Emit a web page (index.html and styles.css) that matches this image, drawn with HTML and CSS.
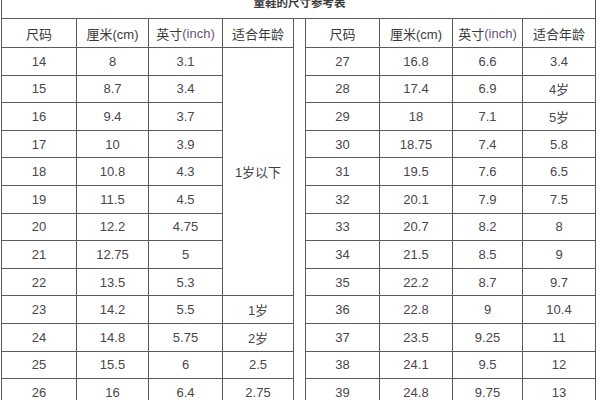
FILE: index.html
```html
<!DOCTYPE html>
<html lang="zh">
<head>
<meta charset="utf-8">
<title>童鞋的尺寸参考表</title>
<link rel="stylesheet" href="styles.css">
</head>
<body>
<div class="chart">
  <div class="title"><span>童鞋的尺寸参考表</span></div>

  <div class="cell head">尺码</div>
  <div class="cell head">厘米(cm)</div>
  <div class="cell head">英寸<span class="inch">(inch)</span></div>
  <div class="cell head">适合年龄</div>
  <div class="gap"></div>
  <div class="cell head c6">尺码</div>
  <div class="cell head">厘米(cm)</div>
  <div class="cell head">英寸<span class="inch">(inch)</span></div>
  <div class="cell head">适合年龄</div>

  <div class="cell">14</div><div class="cell">8</div><div class="cell">3.1</div>
  <div class="cell age-merged">1岁以下</div>
  <div class="cell c6">27</div><div class="cell">16.8</div><div class="cell">6.6</div><div class="cell">3.4</div>

  <div class="cell">15</div><div class="cell">8.7</div><div class="cell">3.4</div>
  <div class="cell c6">28</div><div class="cell">17.4</div><div class="cell">6.9</div><div class="cell">4岁</div>

  <div class="cell">16</div><div class="cell">9.4</div><div class="cell">3.7</div>
  <div class="cell c6">29</div><div class="cell">18</div><div class="cell">7.1</div><div class="cell">5岁</div>

  <div class="cell">17</div><div class="cell">10</div><div class="cell">3.9</div>
  <div class="cell c6">30</div><div class="cell">18.75</div><div class="cell">7.4</div><div class="cell">5.8</div>

  <div class="cell">18</div><div class="cell">10.8</div><div class="cell">4.3</div>
  <div class="cell c6">31</div><div class="cell">19.5</div><div class="cell">7.6</div><div class="cell">6.5</div>

  <div class="cell">19</div><div class="cell">11.5</div><div class="cell">4.5</div>
  <div class="cell c6">32</div><div class="cell">20.1</div><div class="cell">7.9</div><div class="cell">7.5</div>

  <div class="cell">20</div><div class="cell">12.2</div><div class="cell">4.75</div>
  <div class="cell c6">33</div><div class="cell">20.7</div><div class="cell">8.2</div><div class="cell">8</div>

  <div class="cell">21</div><div class="cell">12.75</div><div class="cell">5</div>
  <div class="cell c6">34</div><div class="cell">21.5</div><div class="cell">8.5</div><div class="cell">9</div>

  <div class="cell">22</div><div class="cell">13.5</div><div class="cell">5.3</div>
  <div class="cell c6">35</div><div class="cell">22.2</div><div class="cell">8.7</div><div class="cell">9.7</div>

  <div class="cell">23</div><div class="cell">14.2</div><div class="cell">5.5</div><div class="cell">1岁</div>
  <div class="cell c6">36</div><div class="cell">22.8</div><div class="cell">9</div><div class="cell">10.4</div>

  <div class="cell">24</div><div class="cell">14.8</div><div class="cell">5.75</div><div class="cell">2岁</div>
  <div class="cell c6">37</div><div class="cell">23.5</div><div class="cell">9.25</div><div class="cell">11</div>

  <div class="cell">25</div><div class="cell">15.5</div><div class="cell">6</div><div class="cell">2.5</div>
  <div class="cell c6">38</div><div class="cell">24.1</div><div class="cell">9.5</div><div class="cell">12</div>

  <div class="cell">26</div><div class="cell">16</div><div class="cell">6.4</div><div class="cell">2.75</div>
  <div class="cell c6">39</div><div class="cell">24.8</div><div class="cell">9.75</div><div class="cell">13</div>
</div>
</body>
</html>
```

FILE: styles.css
```css
html, body {
  margin: 0;
  padding: 0;
  background: #ffffff;
  overflow: hidden;
}

.chart {
  margin: -1px 0 0 1px;
  width: 595px;
  box-sizing: border-box;
  padding: 1px;
  background: #5a5a5a;
  display: grid;
  grid-template-columns: 74px 71px 73px 70px 11px 73px 72px 69px 72px;
  grid-template-rows: 18px 28px repeat(13, 26.6px);
  gap: 1px;
  font-family: "Liberation Sans", "Noto Sans CJK SC", sans-serif;
  font-size: 13px;
  color: #4a464c;
}

.title {
  grid-column: 1 / -1;
  background: #fff;
  display: flex;
  justify-content: center;
  align-items: flex-start;
  overflow: visible;
}

.title span {
  font-size: 11.5px;
  line-height: 12px;
  font-weight: bold;
  color: #3a3a3a;
  margin-top: -3px;
  margin-left: 2px;
}

.cell {
  background: #fff;
  display: flex;
  align-items: center;
  justify-content: center;
  white-space: nowrap;
}

.head {
  color: #3a3a3a;
}

.inch {
  color: #6a5278;
}

.gap {
  background: #fff;
  grid-column: 5;
  grid-row: 2 / span 14;
}

.c6 {
  grid-column: 6;
}

.age-merged {
  grid-column: 4;
  grid-row: 3 / span 9;
  color: #3f3f3f;
}
```
